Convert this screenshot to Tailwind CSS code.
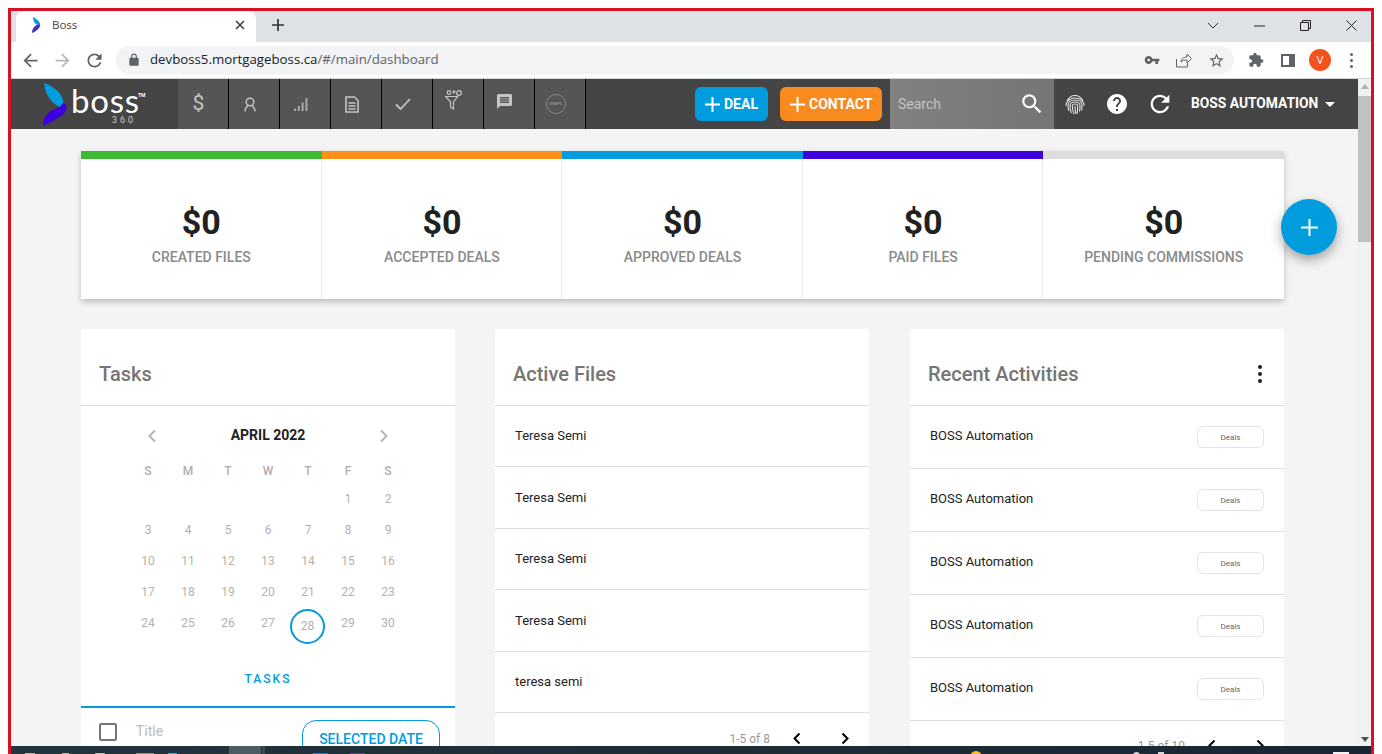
<!DOCTYPE html>
<html lang="en">
<head>
    <meta charset="UTF-8">
    <title>Boss</title>
    <script src="https://cdn.jsdelivr.net/npm/@tailwindcss/browser@4"></script>
</head>
<body class="bg-white w-[1382px] h-[754px] overflow-hidden relative font-['Roboto',sans-serif]">

    <!-- Browser frame -->
    <div class="mt-2 ml-2 w-[1366px] h-[746px] border-x-[3px] border-t-[3px] border-[#d9101f] flex flex-col overflow-hidden">

        <!-- Tab strip -->
        <div class="h-[31px] bg-[#dee1e6] flex shrink-0">
            <div class="ml-[5px] w-[240px] bg-white rounded-t-lg flex items-center pl-[15px] pr-[10px] pb-[3px]">
                <svg width="12" height="16" viewBox="0 0 12 16"><path d="M2 0 C6 2 9 5 9 7 L6 8 C3 6 2 3 2 0Z" fill="#0a9bd8"/><path d="M9 7 C10 10 6 14 1 16 C1 12 3 9 6 8Z" fill="#3f35b5"/></svg>
                <span class="ml-[9px] text-[11.5px] text-[#444] font-['Open_Sans',sans-serif]">Boss</span>
                <svg class="ml-auto" width="12" height="12" viewBox="0 0 12 12" fill="none" stroke="#444" stroke-width="1.7"><path d="M2 2l8 8M10 2l-8 8"/></svg>
            </div>
            <div class="ml-[15px] flex items-center pb-[3px]">
                <svg width="14" height="14" viewBox="0 0 14 14" fill="none" stroke="#333" stroke-width="1.7"><path d="M7 1v12M1 7h12"/></svg>
            </div>
            <div class="ml-auto mr-[-3px] flex items-center pb-[2px]">
                <div class="w-[46px] flex justify-center"><svg width="12" height="8" viewBox="0 0 12 8" fill="none" stroke="#333"><path d="M1 1l5 5 5-5"/></svg></div>
                <div class="w-[46px] flex justify-center"><svg width="11" height="2" viewBox="0 0 11 2"><path d="M0 1h11" stroke="#222"/></svg></div>
                <div class="w-[46px] flex justify-center"><svg width="11" height="11" viewBox="0 0 11 11" fill="none" stroke="#222"><path d="M.5 2.500h8v8h-8zM2.500 2.500v-2h8v8h-2"/></svg></div>
                <div class="w-[46px] flex justify-center"><svg width="11" height="11" viewBox="0 0 11 11" fill="none" stroke="#222"><path d="M.5.5l10 10M10.500.5l-10 10"/></svg></div>
            </div>
        </div>

        <!-- Toolbar -->
        <div class="h-[37px] bg-white border-b border-[#d2d3d5] flex shrink-0 pt-[4px] pb-[4px]">
            <div class="flex items-center h-[28px] w-[105px] pl-[3px]">
                <div class="w-[32px] flex justify-center"><svg width="21" height="21" viewBox="0 0 24 24" fill="#5f6368"><path d="M20 11H7.830l5.590-5.590L12 4l-8 8 8 8 1.410-1.410L7.830 13H20v-2z"/></svg></div>
                <div class="w-[32px] flex justify-center"><svg width="21" height="21" viewBox="0 0 24 24" fill="#b4b6b9"><path d="M4 11h12.170l-5.590-5.590L12 4l8 8-8 8-1.410-1.410L16.170 13H4v-2z"/></svg></div>
                <div class="w-[32px] flex justify-center"><svg width="21" height="21" viewBox="0 0 24 24" fill="#5f6368"><path d="M17.650 6.350A7.958 7.958 0 0 0 12 4c-4.420 0-7.990 3.580-7.990 8s3.570 8 7.990 8c3.730 0 6.840-2.550 7.730-6h-2.080A5.990 5.990 0 0 1 12 18c-3.310 0-6-2.690-6-6s2.690-6 6-6c1.660 0 3.140.69 4.220 1.780L13 11h7V4l-2.350 2.350z"/></svg></div>
            </div>
            <div class="w-[1118px] h-[28px] bg-[#f1f3f4] rounded-full flex items-center pl-[11px] pr-[9px]">
                <svg width="14" height="14" viewBox="0 0 24 24" fill="#5f6368"><path d="M18 8h-1V6c0-2.760-2.240-5-5-5S7 3.240 7 6v2H6c-1.100 0-2 .9-2 2v10c0 1.100.9 2 2 2h12c1.100 0 2-.9 2-2V10c0-1.100-.9-2-2-2zM9 6c0-1.660 1.340-3 3-3s3 1.340 3 3v2H9V6z"/></svg>
                <span class="ml-[9px] text-[13.25px] text-[#202124] font-['Open_Sans',sans-serif]">devboss5.mortgageboss.ca<span class="text-[#5f6368]">/#/main/dashboard</span></span>
                <div class="ml-auto flex items-center gap-[16px]">
                    <svg width="16" height="16" viewBox="0 0 24 24" fill="#5f6368"><path d="M12.650 10C11.830 7.670 9.610 6 7 6c-3.310 0-6 2.690-6 6s2.690 6 6 6c2.610 0 4.830-1.670 5.650-4H17v4h4v-4h2v-4H12.650zM7 14c-1.100 0-2-.9-2-2s.9-2 2-2 2 .9 2 2-.9 2-2 2z"/></svg>
                    <svg width="16" height="16" viewBox="0 0 16 16" fill="none" stroke="#5f6368"><path d="M.5 7v8h11v-4M5 10c0-3 3-5 6-5V2l4.500 4.500L11 11V8C8.500 8 6.500 8.500 5 10z"/></svg>
                    <svg width="17" height="17" viewBox="0 0 24 24" fill="#5f6368"><path d="M22 9.240l-7.190-.62L12 2 9.190 8.630 2 9.240l5.460 4.730L5.820 21 12 17.270 18.180 21l-1.630-7.030L22 9.240zM12 15.400l-3.760 2.270 1-4.280-3.320-2.880 4.380-.38L12 6.100l1.710 4.040 4.380.38-3.320 2.880 1 4.280L12 15.400z"/></svg>
                </div>
            </div>
            <div class="flex items-center h-[28px] pl-[14px]">
                <svg width="16" height="16" viewBox="0 0 24 24" fill="#5f6368"><path d="M20.500 11H19V7c0-1.100-.9-2-2-2h-4V3.500C13 2.120 11.880 1 10.500 1S8 2.120 8 3.500V5H4c-1.100 0-1.990.9-1.990 2v3.800H3.500c1.490 0 2.700 1.210 2.700 2.700s-1.210 2.700-2.700 2.700H2V20c0 1.100.9 2 2 2h3.800v-1.500c0-1.490 1.210-2.700 2.700-2.700 1.490 0 2.700 1.210 2.700 2.700V22H17c1.100 0 2-.9 2-2v-4h1.500c1.380 0 2.500-1.120 2.500-2.500S21.880 11 20.500 11z"/></svg>
                <div class="ml-[17px] w-[14px] h-[13px] border-2 border-[#5f6368] flex justify-end"><div class="w-[4px] bg-[#5f6368]"></div></div>
                <div class="ml-[14px] w-[22px] h-[22px] rounded-full bg-[#f4511e] text-white text-[11px] flex items-center justify-center font-['Open_Sans',sans-serif]">V</div>
                <div class="ml-[19px] flex flex-col gap-[3px]">
                    <div class="w-[3px] h-[3px] rounded-full bg-[#5f6368]"></div>
                    <div class="w-[3px] h-[3px] rounded-full bg-[#5f6368]"></div>
                    <div class="w-[3px] h-[3px] rounded-full bg-[#5f6368]"></div>
                </div>
            </div>
        </div>

        <!-- Page viewport -->
        <div class="flex flex-1 min-h-0">
            <div class="w-[1347px] flex flex-col relative">

                <!-- App navbar -->
                <div class="h-[50px] bg-[#444444] flex shrink-0 items-stretch">
                    <div class="w-[167px] flex pl-[32px] items-center">
                        <svg width="27" height="43" viewBox="0 0 27 43"><path d="M1 0 C10 3 20 10 20.500 20 L17 24 C7 20 2 10 1 0Z" fill="#009cde"/><path d="M20.500 20 C26 22 24 29 18 33 C13 37 6 40 0 43 C0 33 6 27 17 24Z" fill="#3a00e0"/></svg>
                        <div class="ml-[1px] relative w-[76px] h-[40px] text-white">
                            <div class="mt-[2px] text-[33px] leading-[29px] font-normal tracking-[0.75px] font-['Lato',sans-serif]">boss</div>
                            <div class="absolute left-[67px] top-[8px] text-[5px] leading-[6px] font-bold">TM</div>
                            <div class="absolute left-[41px] top-[32px] text-[9px] leading-[9px] tracking-[3px] text-[#ccc]">360</div>
                        </div>
                    </div>

                    <div class="w-[51px] bg-[#555555] border-r border-black flex items-center justify-center pr-[9px] text-[#c4c4c4] text-[21px]">$</div>
                    <div class="w-[51px] bg-[#555555] border-r border-black flex items-center justify-center pr-[9px]">
                        <svg width="14" height="15" viewBox="0 0 14 15" fill="none" stroke="#c4c4c4" stroke-width="1.500"><circle cx="7" cy="5" r="3.800"/><path d="M2 14.500c0-3 2-5.500 3-5.800M12 14.500c0-3-2-5.500-3-5.800"/></svg>
                    </div>
                    <div class="w-[51px] bg-[#555555] border-r border-black flex items-center justify-center pr-[9px]">
                        <svg width="14" height="13" viewBox="0 0 14 13" fill="#a8a8a8"><path d="M0 10.500h2V13H0zM3.800 8h2v5h-2zM7.600 4.500h2V13h-2zM11.400 0h2v13h-2z"/></svg>
                    </div>
                    <div class="w-[51px] bg-[#555555] border-r border-black flex items-center justify-center pr-[9px]">
                        <svg width="14" height="17" viewBox="0 0 14 17" fill="none" stroke="#c4c4c4" stroke-width="1.600"><path d="M1 1h8.500L13 4.500V16H1zM3.500 7h7M3.500 10h7M3.500 13h7"/></svg>
                    </div>
                    <div class="w-[51px] bg-[#555555] border-r border-black flex items-center justify-center pr-[9px]">
                        <svg width="16" height="12" viewBox="0 0 16 12" fill="none" stroke="#c4c4c4" stroke-width="1.800"><path d="M1 6.500L5.500 11 15 1"/></svg>
                    </div>
                    <div class="w-[51px] bg-[#555555] border-r border-black flex items-start justify-center pr-[9px] pt-[11px]">
                        <svg width="18" height="20" viewBox="0 0 18 20" fill="none" stroke="#c4c4c4" stroke-width="1.200"><path d="M.6 6.500h12L8.500 12v7l-3-2v-5z"/><circle cx="4" cy="2.500" r="1.800"/><circle cx="14" cy="3" r="2.300"/><circle cx="9" cy="1.800" r="1"/></svg>
                    </div>
                    <div class="w-[51px] bg-[#555555] border-r border-black flex items-start justify-center pr-[9px] pt-[15px]">
                        <svg width="15" height="15" viewBox="2 2 20 20" fill="#c4c4c4"><path d="M20 2H4c-1.100 0-2 .9-2 2v18l4-4h14c1.100 0 2-.9 2-2V4c0-1.100-.9-2-2-2zm-2 12H6v-2h12v2zm0-3H6V9h12v2zm0-3H6V6h12v2z"/></svg>
                    </div>
                    <div class="w-[51px] bg-[#555555] border-r border-black flex items-center justify-center pr-[8px]">
                        <div class="w-[20px] h-[20px] rounded-full border border-[#8a8a8a] flex items-center justify-center text-[4px] font-bold tracking-[0.3px] text-[#999]">SIMPL</div>
                    </div>

                    <div class="ml-[109px] self-center w-[73px] h-[34px] bg-[#009cde] rounded-md flex items-center pl-[10px] gap-[4px] text-white text-[14px] font-medium">
                        <svg width="15" height="15" viewBox="0 0 15 15" stroke="#fff" stroke-width="2"><path d="M7.500 0v15M0 7.500h15"/></svg>
                        <span class="font-bold">DEAL</span>
                    </div>
                    <div class="ml-[12px] self-center w-[102px] h-[34px] bg-[#f78b1f] rounded-md flex items-center pl-[10px] gap-[4px] text-white text-[14px]">
                        <svg width="15" height="15" viewBox="0 0 15 15" stroke="#fff" stroke-width="2"><path d="M7.500 0v15M0 7.500h15"/></svg>
                        <span class="font-bold">CONTACT</span>
                    </div>

                    <div class="ml-[8px] w-[164px] bg-gradient-to-r from-[#818181] to-[#757575] flex items-center pl-[8px] pr-[9px]">
                        <span class="text-[14px] text-[#c2c2c2]">Search</span>
                        <svg class="ml-auto" width="26" height="26" viewBox="0 0 24 24" fill="#fff"><path d="M15.500 14h-.79l-.28-.27A6.471 6.471 0 0 0 16 9.500 6.500 6.500 0 1 0 9.500 16c1.610 0 3.090-.59 4.230-1.570l.27.28v.79l5 4.990L20.490 19l-4.990-5zm-6 0C7.010 14 5 11.990 5 9.500S7.010 5 9.500 5 14 7.010 14 9.500 11.990 14 9.500 14z"/></svg>
                    </div>

                    <div class="flex items-center pl-[11px]">
                        <svg width="20" height="21" viewBox="0 0 20 21" fill="none" stroke="#e6e6e6" stroke-width="1.100"><path d="M2 7C4 3 7 1.500 10 1.500S16 3 18 7M1 12c0-5 4-8 9-8s9 3 9 8M4 17c-1-2-1-3-1-5 0-4 3-6 7-6s7 2 7 6c0 2 0 3-.5 4.500M6.500 19c-1-2-1.500-4-1.500-7 0-3 2-4 5-4s5 1 5 4c0 2 0 4-.5 5.500M9 20c-1-2-1.700-5-1.700-8 0-1.500 1-2 2.700-2s2.700.5 2.700 2c0 3 0 5-.5 7.500M10 12c0 3 .3 6 1 8"/></svg>
                        <svg class="ml-[20px]" width="24" height="24" viewBox="0 0 24 24" fill="#fff"><path d="M12 2C6.480 2 2 6.480 2 12s4.480 10 10 10 10-4.480 10-10S17.520 2 12 2zm1 17h-2v-2h2v2zm2.070-7.750l-.9.92C13.450 12.900 13 13.500 13 15h-2v-.5c0-1.100.45-2.100 1.170-2.830l1.240-1.260c.37-.36.59-.86.59-1.410 0-1.100-.9-2-2-2s-2 .9-2 2H8c0-2.210 1.790-4 4-4s4 1.790 4 4c0 .88-.36 1.680-.93 2.250z"/></svg>
                        <svg class="ml-[17px]" width="28" height="28" viewBox="0 0 24 24" fill="#fff"><path d="M17.650 6.350A7.958 7.958 0 0 0 12 4c-4.420 0-7.990 3.580-7.990 8s3.570 8 7.990 8c3.730 0 6.840-2.550 7.730-6h-2.080A5.990 5.990 0 0 1 12 18c-3.310 0-6-2.690-6-6s2.690-6 6-6c1.660 0 3.140.69 4.220 1.780L13 11h7V4l-2.350 2.350z"/></svg>
                        <span class="ml-[17px] mb-[2px] text-[13.8px] font-bold text-white whitespace-nowrap">BOSS AUTOMATION</span>
                        <svg class="ml-[7px]" width="10" height="5" viewBox="0 0 10 5" fill="#fff"><path d="M0 0h10L5 5z"/></svg>
                    </div>
                </div>

                <!-- Dashboard -->
                <div class="flex-1 min-h-0 bg-[#f4f4f4] pt-[22px] pl-[70px] pr-[74px] overflow-hidden">

                    <!-- Stats -->
                    <div class="h-[148px] grid grid-cols-5 bg-white shadow-[0_3px_6px_rgba(0,0,0,0.22)]">
                        <div class="border-t-[8px] border-[#3dba33] flex flex-col items-center pt-[43px] shadow-[inset_-1px_0_0_#ececec]">
                            <div class="text-[34px] leading-[40px] font-bold text-[#212121]">$0</div>
                            <div class="mt-[5px] text-[14px] leading-[20px] font-medium text-[#8a8a8a]">CREATED FILES</div>
                        </div>
                        <div class="border-t-[8px] border-[#ff9017] flex flex-col items-center pt-[43px] shadow-[inset_-1px_0_0_#ececec]">
                            <div class="text-[34px] leading-[40px] font-bold text-[#212121]">$0</div>
                            <div class="mt-[5px] text-[14px] leading-[20px] font-medium text-[#8a8a8a]">ACCEPTED DEALS</div>
                        </div>
                        <div class="border-t-[8px] border-[#009cde] flex flex-col items-center pt-[43px] shadow-[inset_-1px_0_0_#ececec]">
                            <div class="text-[34px] leading-[40px] font-bold text-[#212121]">$0</div>
                            <div class="mt-[5px] text-[14px] leading-[20px] font-medium text-[#8a8a8a]">APPROVED DEALS</div>
                        </div>
                        <div class="border-t-[8px] border-[#3f00dc] flex flex-col items-center pt-[43px] shadow-[inset_-1px_0_0_#ececec]">
                            <div class="text-[34px] leading-[40px] font-bold text-[#212121]">$0</div>
                            <div class="mt-[5px] text-[14px] leading-[20px] font-medium text-[#8a8a8a]">PAID FILES</div>
                        </div>
                        <div class="border-t-[8px] border-[#dddddd] flex flex-col items-center pt-[43px]">
                            <div class="text-[34px] leading-[40px] font-bold text-[#212121]">$0</div>
                            <div class="mt-[5px] text-[14px] leading-[20px] font-medium text-[#8a8a8a]">PENDING COMMISSIONS</div>
                        </div>
                    </div>

                    <!-- Panels -->
                    <div class="mt-[30px] flex items-start">

                        <!-- Tasks -->
                        <div class="w-[374px] bg-white rounded-t-[3px]">
                            <div class="h-[77px] border-b border-[#dedede] flex items-center pl-[18px] pt-[18px] pb-[5px] text-[20px] font-medium text-[#757575]">Tasks</div>
                            <div class="h-[58px] flex items-center justify-between pl-[66px] pr-[66px]">
                                <svg class="mt-[2px]" width="10" height="14" viewBox="0 0 10 14" fill="none" stroke="#b5b5b5" stroke-width="2"><path d="M8 1.500L2.500 7 8 12.500"/></svg>
                                <span class="text-[14px] font-bold text-[#222]">APRIL 2022</span>
                                <svg class="mt-[2px]" width="10" height="14" viewBox="0 0 10 14" fill="none" stroke="#b5b5b5" stroke-width="2"><path d="M2 1.500L7.500 7 2 12.500"/></svg>
                            </div>
                            <div class="mx-[47px] grid grid-cols-7 text-center text-[12px] text-[#b0aeae]">
                                <div class="h-[20px] leading-[14px] font-medium">S</div><div class="h-[20px] leading-[14px] font-medium">M</div><div class="h-[20px] leading-[14px] font-medium">T</div><div class="h-[20px] leading-[14px] font-medium">W</div><div class="h-[20px] leading-[14px] font-medium">T</div><div class="h-[20px] leading-[14px] font-medium">F</div><div class="h-[20px] leading-[14px] font-medium">S</div>
                            </div>
                            <div class="mx-[47px] grid grid-cols-7 auto-rows-[31px] text-center text-[12px] leading-[31px] text-[#b4b1ae]">
                                <div></div><div></div><div></div><div></div><div></div><div>1</div><div>2</div>
                                <div>3</div><div>4</div><div>5</div><div>6</div><div>7</div><div>8</div><div>9</div>
                                <div>10</div><div>11</div><div>12</div><div>13</div><div>14</div><div>15</div><div>16</div>
                                <div>17</div><div>18</div><div>19</div><div>20</div><div>21</div><div>22</div><div>23</div>
                                <div>24</div><div>25</div><div>26</div><div>27</div>
                                <div class="relative"><span class="absolute left-[2px] top-[1px] w-[35px] h-[35px] rounded-full border-2 border-[#009cde] leading-[31px]">28</span></div>
                                <div>29</div><div>30</div>
                            </div>
                            <div class="mt-[32px] text-center text-[12px] leading-[16px] font-medium tracking-[2px] text-[#009cde]">TASKS</div>
                            <div class="mt-[19px] h-[2px] bg-[#009cde]"></div>
                            <div class="flex pl-[18px] pr-[15px] pt-[12px]">
                                <div class="mt-[3px] w-[18px] h-[18px] border-2 border-[#757575] rounded-[2px]"></div>
                                <span class="ml-[19px] mt-[2px] text-[14px] leading-[18px] text-[#bdbdbd]">Title</span>
                                <div class="ml-auto w-[138px] h-[40px] border border-[#009cde] rounded-[14px] text-center text-[14px] leading-[34px] pt-[1px] font-medium text-[#009cde]">SELECTED DATE</div>
                            </div>
                        </div>

                        <!-- Active Files -->
                        <div class="ml-[40px] w-[374px] bg-white rounded-t-[3px]">
                            <div class="h-[77px] border-b border-[#dedede] flex items-center pl-[18px] pt-[18px] pb-[5px] text-[20px] font-medium text-[#757575]">Active Files</div>
                            <div class="h-[61px] border-b border-[#dedede] flex items-center pl-[20px] text-[13px] text-[#222]">Teresa Semi</div>
                            <div class="h-[62px] border-b border-[#dedede] flex items-center pl-[20px] pt-[1px] text-[13px] text-[#222]">Teresa Semi</div>
                            <div class="h-[61px] border-b border-[#dedede] flex items-center pl-[20px] text-[13px] text-[#222]">Teresa Semi</div>
                            <div class="h-[62px] border-b border-[#dedede] flex items-center pl-[20px] pt-[1px] text-[13px] text-[#222]">Teresa Semi</div>
                            <div class="h-[61px] border-b border-[#dedede] flex items-center pl-[20px] text-[13px] text-[#222]">teresa semi</div>
                            <div class="h-[50px] flex items-start justify-end pt-[17px] pr-[19px]">
                                <span class="text-[12px] leading-[18px] text-[#999]">1-5 of 8</span>
                                <svg class="ml-[22px] mt-[2px]" width="10" height="13" viewBox="0 0 10 13" fill="none" stroke="#000" stroke-width="2"><path d="M7.500 1.500L2.500 6.500l5 5"/></svg>
                                <svg class="ml-[38px] mt-[2px]" width="10" height="13" viewBox="0 0 10 13" fill="none" stroke="#000" stroke-width="2"><path d="M2.500 1.500l5 5-5 5"/></svg>
                            </div>
                        </div>

                        <!-- Recent Activities -->
                        <div class="ml-[41px] w-[374px] bg-white rounded-t-[3px]">
                            <div class="h-[77px] border-b border-[#dedede] flex items-center pl-[18px] pr-[22px] pt-[18px] pb-[5px]">
                                <span class="text-[20px] font-medium text-[#757575]">Recent Activities</span>
                                <div class="ml-auto flex flex-col gap-[3px]">
                                    <div class="w-[4px] h-[4px] rounded-full bg-[#222]"></div>
                                    <div class="w-[4px] h-[4px] rounded-full bg-[#222]"></div>
                                    <div class="w-[4px] h-[4px] rounded-full bg-[#222]"></div>
                                </div>
                            </div>
                            <div class="h-[63px] border-b border-[#dedede] flex items-center justify-between pl-[20px] pr-[20px] pb-[2px]">
                                <span class="text-[13px] text-[#222]">BOSS Automation</span>
                                <span class="mt-[2px] w-[67px] h-[22px] border border-[#e3e3e3] rounded-md text-center text-[8px] leading-[22px] text-[#666]">Deals</span>
                            </div>
                            <div class="h-[63px] border-b border-[#dedede] flex items-center justify-between pl-[20px] pr-[20px] pb-[2px]">
                                <span class="text-[13px] text-[#222]">BOSS Automation</span>
                                <span class="mt-[2px] w-[67px] h-[22px] border border-[#e3e3e3] rounded-md text-center text-[8px] leading-[22px] text-[#666]">Deals</span>
                            </div>
                            <div class="h-[63px] border-b border-[#dedede] flex items-center justify-between pl-[20px] pr-[20px] pb-[2px]">
                                <span class="text-[13px] text-[#222]">BOSS Automation</span>
                                <span class="mt-[2px] w-[67px] h-[22px] border border-[#e3e3e3] rounded-md text-center text-[8px] leading-[22px] text-[#666]">Deals</span>
                            </div>
                            <div class="h-[63px] border-b border-[#dedede] flex items-center justify-between pl-[20px] pr-[20px] pb-[2px]">
                                <span class="text-[13px] text-[#222]">BOSS Automation</span>
                                <span class="mt-[2px] w-[67px] h-[22px] border border-[#e3e3e3] rounded-md text-center text-[8px] leading-[22px] text-[#666]">Deals</span>
                            </div>
                            <div class="h-[63px] border-b border-[#dedede] flex items-center justify-between pl-[20px] pr-[20px] pb-[2px]">
                                <span class="text-[13px] text-[#222]">BOSS Automation</span>
                                <span class="mt-[2px] w-[67px] h-[22px] border border-[#e3e3e3] rounded-md text-center text-[8px] leading-[22px] text-[#666]">Deals</span>
                            </div>
                            <div class="h-[40px] flex items-start justify-end pt-[16px] pr-[19px]">
                                <span class="text-[12px] leading-[18px] text-[#999]">1-5 of 10</span>
                                <svg class="ml-[22px] mt-[2px]" width="10" height="13" viewBox="0 0 10 13" fill="none" stroke="#000" stroke-width="2"><path d="M7.500 1.500L2.500 6.500l5 5"/></svg>
                                <svg class="ml-[38px] mt-[2px]" width="10" height="13" viewBox="0 0 10 13" fill="none" stroke="#000" stroke-width="2"><path d="M2.500 1.500l5 5-5 5"/></svg>
                            </div>
                        </div>
                    </div>
                </div>

                <!-- Floating add button -->
                <div class="absolute left-[1270px] top-[120px] w-[56px] h-[56px] rounded-full bg-[#009cde] shadow-[0_5px_12px_rgba(0,0,0,0.35)] flex items-center justify-center">
                    <svg width="17" height="17" viewBox="0 0 17 17" stroke="#fff" stroke-width="2"><path d="M8.500 0v17M0 8.500h17"/></svg>
                </div>
            </div>

            <!-- Scrollbar -->
            <div class="w-[13px] bg-[#f1f1f1] flex flex-col items-center">
                <svg class="mt-[5px]" width="8" height="5" viewBox="0 0 8 5" fill="#b0b0b0"><path d="M4 0l4 5H0z"/></svg>
                <div class="mt-[7px] w-[13px] h-[146px] bg-[#c1c1c1]"></div>
                <svg class="mt-auto mb-[12px]" width="8" height="5" viewBox="0 0 8 5" fill="#505050"><path d="M4 5l4-5H0z"/></svg>
            </div>
        </div>
    </div>

    <!-- Windows taskbar peeking in at the bottom -->
    <div class="absolute left-[11px] right-[11px] bottom-0 h-[8px] bg-gradient-to-r from-[#22343c] via-[#1e2c36] to-[#1a2732] overflow-hidden">
        <div class="absolute left-[14px] top-[7px] w-[10px] h-[1px] bg-[#b8bcbe]"></div>
        <div class="absolute left-[51px] top-[7px] w-[7px] h-[1px] bg-[#b8bcbe]"></div>
        <div class="absolute left-[84px] top-[7px] w-[10px] h-[1px] bg-[#b8bcbe]"></div>
        <div class="absolute left-[125px] top-[7px] w-[18px] h-[1px] bg-[#8d9599]"></div>
        <div class="absolute left-[157px] top-[7px] w-[9px] h-[1px] bg-[#2fb4c8]"></div>
        <div class="absolute left-[218px] top-0 w-[32px] h-[8px] bg-[#4d5c62]"></div>
        <div class="absolute left-[251px] top-0 w-[3px] h-[8px] bg-[#3c4a50]"></div>
        <div class="absolute left-[302px] top-[7px] w-[15px] h-[1px] bg-[#1976d2]"></div>
        <div class="absolute left-[339px] top-[7px] w-[15px] h-[1px] bg-[#7b2f9e]"></div>
        <div class="absolute left-[959px] top-[5px] w-[12px] h-[12px] rounded-full bg-[#f2c230]"></div>
        <div class="absolute left-[1122px] top-[6px] w-[7px] h-[7px] rounded-full bg-[#d5d8da]"></div>
        <div class="absolute left-[1147px] top-[6px] w-[6px] h-[2px] bg-[#d5d8da]"></div>
        <div class="absolute left-[1322px] top-[6px] w-[16px] h-[2px] bg-[#f2f2f2]"></div>
    </div>
</body>
</html>
